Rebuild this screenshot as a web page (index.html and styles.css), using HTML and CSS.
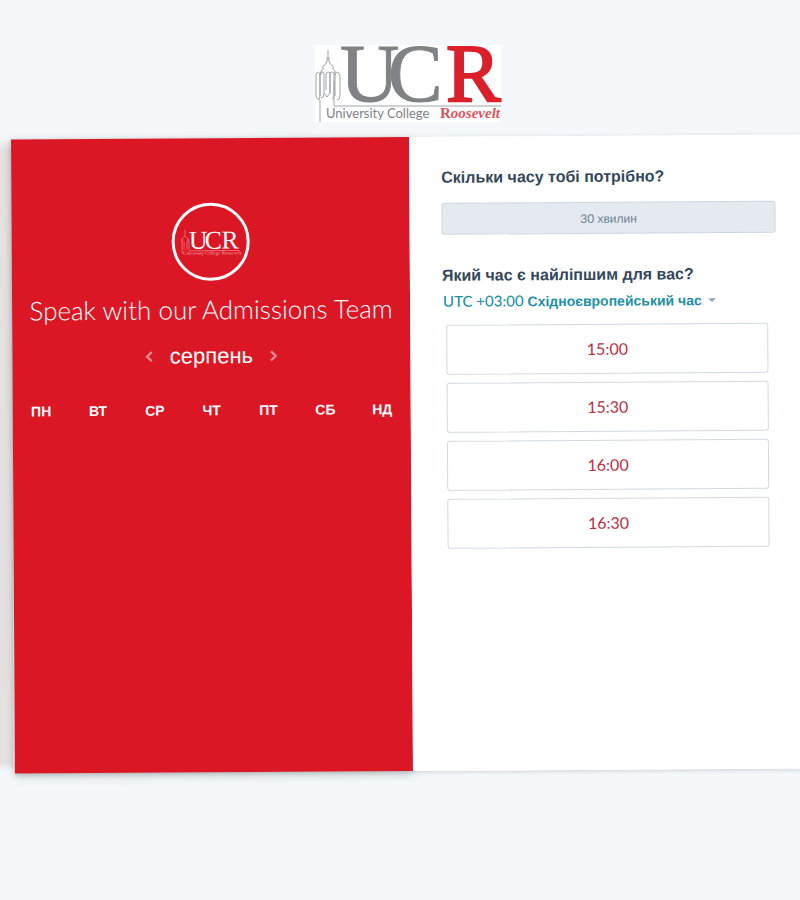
FILE: index.html
```html
<!DOCTYPE html>
<html lang="uk">
<head>
<meta charset="utf-8">
<meta name="viewport" content="width=device-width, initial-scale=1">
<title>University College Roosevelt</title>
<link rel="stylesheet" href="styles.css">
</head>
<body>
<header class="brand">
  <svg class="brand-logo" viewBox="0 0 186 78" role="img" aria-label="University College Roosevelt">
    <rect width="186" height="77" fill="#fff"/>
    <g fill="none" stroke="#a2a4a7" stroke-width="1">
      <path d="M13 5v11M12 12v4q-1 4-4 5v3l-2 2v4M14 12v4q1 4 4 5v3l2 2v4"/>
      <path d="M5 77V55q-4-1-4-4V31q0-4 2-4t2 4v20q0 3-2 3M5 51V29q0-2 2-2t2 2v20q0 4-3 4M9 48l3 4 3-4V29q0-2-2-2t-2 2v16M15 48V29q0-2 2-2t2 2v22q0 3-2 3M20 51V31q0-4 2-4t3 4v20q0 4-3 4M19 36v25h167"/>
    </g>
    <g class="logo-letters">
      <text x="25" y="56" fill="#808285" stroke="#808285">U</text>
      <text x="73" y="56" fill="#808285" stroke="#808285">C</text>
      <text x="131" y="56" fill="#d9202b" stroke="#d9202b" class="logo-r">R</text>
    </g>
    <text class="logo-name" x="11" y="73">University College</text>
    <text class="logo-surname" x="125" y="73"><tspan class="logo-initial">R</tspan>oosevelt</text>
  </svg>
</header>
<main class="booking">
  <div class="card">
    <section class="calendar">
      <svg class="avatar" viewBox="0 0 80 80" role="img" aria-label="UCR">
        <circle cx="40" cy="40" r="38" fill="none" stroke="#fff" stroke-width="3"/>
        <path d="M14 28v6l-3 3v4M14 34l3 3v4M11 52V36M13 48V40M16 48V40M18 48V37M18 49h51" fill="none" stroke="#e9626b" stroke-width="1"/>
        <g class="avatar-letters">
          <text x="18" y="47">U</text><text x="34" y="47">C</text><text x="51" y="47">R</text>
        </g>
        <text class="avatar-name" x="12" y="53">University College Roosevelt</text>
      </svg>
      <h1 class="title">Speak with our Admissions Team</h1>
      <div class="month">
        <button class="month-nav" type="button" aria-label="Попередній місяць"><svg viewBox="0 0 8 12"><path d="M6 2 2 6l4 4"/></svg></button>
        <h2 class="month-name">серпень</h2>
        <button class="month-nav" type="button" aria-label="Наступний місяць"><svg viewBox="0 0 8 12"><path d="m2 2 4 4-4 4"/></svg></button>
      </div>
      <table class="weekdays">
        <thead><tr><th>ПН</th><th>ВТ</th><th>СР</th><th>ЧТ</th><th>ПТ</th><th>СБ</th><th>НД</th></tr></thead>
      </table>
    </section>
    <section class="times">
      <h2 class="question">Скільки часу тобі потрібно?</h2>
      <button class="duration" type="button"><span class="latin">30</span> хвилин</button>
      <h2 class="question">Який час є найліпшим для вас?</h2>
      <button class="timezone" type="button" aria-haspopup="listbox"><span class="latin">UTC +03:00</span> <b>Східноєвропейський час</b><svg class="caret" viewBox="0 0 8 4"><path d="M0 0h8L4 4z"/></svg></button>
      <ul class="slots">
        <li><button class="slot" type="button">15:00</button></li>
        <li><button class="slot" type="button">15:30</button></li>
        <li><button class="slot" type="button">16:00</button></li>
        <li><button class="slot" type="button">16:30</button></li>
      </ul>
    </section>
  </div>
</main>
</body>
</html>
```
FILE: styles.css
```css
* { box-sizing: border-box; }
html { min-height: 100%; background: #f4f8fb; }
body {
  min-height: 100vh;
  margin: 0;
  overflow-x: hidden;
  font-family: "Liberation Sans", sans-serif;
  color: #33475b;
}
h1, h2, ul { margin: 0; padding: 0; font-weight: 400; }
button { padding: 0; border: 0; background: none; font-family: inherit; cursor: pointer; }

.brand { display: flex; justify-content: center; padding: 45px 0 14px 16px; }
.brand-logo { display: block; width: 186px; height: 78px; overflow: visible; }
.logo-letters { font-family: "Liberation Serif", serif; font-size: 82px; stroke-width: 1; }
.logo-r { stroke-width: 2; }
.logo-name { font-family: Lato, sans-serif; font-size: 13px; fill: #808285; }
.logo-surname { font-family: "Liberation Serif", serif; font-size: 15px; font-style: italic; font-weight: 700; fill: #e0525a; }
.logo-initial { font-style: normal; }

.booking {
  padding-left: 13px;
  background: linear-gradient(#f4f8fb, #e5e1e1 14px, #e5e1e1 calc(100% - 8px), #f4f8fb) no-repeat left / 13px 100%;
}
.card {
  display: grid;
  grid-template-columns: 1fr 1fr;
  min-height: 634px;
  margin-right: -9px;
  background: #fff;
  box-shadow: 0 1px 4px rgba(45, 62, 80, .22);
  transform: rotate(-0.36deg);
}

.calendar {
  display: flex;
  flex-direction: column;
  align-items: center;
  padding-top: 64px;
  background: #dc1725;
  box-shadow: 0 3px 10px rgba(45, 62, 50, .25);
  color: #fff;
}
.avatar { display: block; width: 80px; height: 79px; overflow: visible; }
.avatar-letters { font-family: "Liberation Serif", serif; font-size: 26px; fill: #fff; }
.avatar-name { font-family: "Liberation Serif", serif; font-size: 5px; fill: #f5a9ad; }
.title { margin-top: 11px; font: 300 26px/34px Lato, sans-serif; white-space: nowrap; }
.month { display: flex; align-items: center; gap: 14px; margin-top: 16px; }
.month-name { font-size: 22px; line-height: 28px; }
.month-nav { display: flex; width: 12px; justify-content: center; }
.month-nav svg { width: 10px; height: 14px; fill: none; stroke: #f08b91; stroke-width: 2; }
.weekdays { width: 100%; margin-top: 28px; table-layout: fixed; border-collapse: collapse; }
.weekdays th { padding: 0; font-size: 14px; line-height: 24px; text-align: center; }

.times {
  z-index: 1;
  display: flex;
  flex-direction: column;
  padding: 31px 32px;
  background: #fff;
}
.question { font-size: 16px; line-height: 20px; font-weight: 700; }
.latin { font-family: Lato, sans-serif; }
.duration {
  height: 32px;
  margin: 15px 0 31px;
  border: 1px solid #cbd6e2;
  border-radius: 3px;
  background: #e5eaf0;
  color: #6a7f96;
  font-size: 12px;
}
.timezone { align-self: flex-start; margin: 4px 0 0 1px; color: #1f8fa3; font-size: 14px; line-height: 22px; }
.timezone .latin { font-size: 15px; font-weight: 500; }
.caret { width: 8px; height: 4px; margin-left: 6px; vertical-align: 3px; fill: #8fa5b5; }
.slots { display: grid; gap: 8px; margin: 12px 8px 0 4px; list-style: none; }
.slot {
  display: block;
  width: 100%;
  height: 50px;
  padding-bottom: 2px;
  border: 1px solid #d2d9e0;
  border-radius: 3px;
  color: #b92c3d;
  font-family: Lato, sans-serif;
  font-size: 16px;
}
```
